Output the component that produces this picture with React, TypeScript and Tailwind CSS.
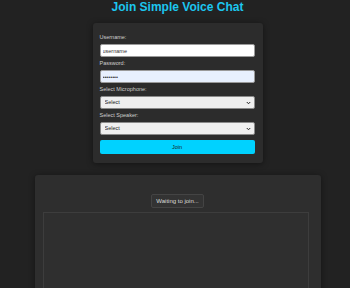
import React from "react";

const fields = [
  { label: "Username:", kind: "text", value: "username" },
  { label: "Password:", kind: "password", value: "password" },
  { label: "Select Microphone:", kind: "select", value: "Select" },
  { label: "Select Speaker:", kind: "select", value: "Select" },
];

function Chevron() {
  return (
    <svg
      className="pointer-events-none absolute right-[4px] top-[5px]"
      width="5"
      height="4"
      viewBox="0 0 10 8"
    >
      <path d="M1.5 2 L5 5.5 L8.5 2" fill="none" stroke="#222" strokeWidth="2" />
    </svg>
  );
}

export default function App() {
  return (
    <div
      className="h-[288px] overflow-hidden bg-[#222222] pl-[5px] flex flex-col items-center"
      style={{ fontFamily: '"Liberation Sans", Arial, sans-serif' }}
    >
      <h1 className="text-[12px] leading-[12px] font-bold text-[#1cc6ef] mt-[1px]">
        Join Simple Voice Chat
      </h1>

      <div className="mt-[10px] w-[170px] shrink-0 rounded-[3px] bg-[#2c2c2c] pt-[11px] pb-[9px] pl-[7px] pr-[8px] shadow-[0_1px_6px_rgba(0,0,0,0.45)]">
        {fields.map((f) => (
          <div key={f.label} className="mb-[3px] text-[5.5px] leading-[7px]">
            <div className="text-[#cfcfcf] mb-[3px]">{f.label}</div>
            {f.kind === "select" ? (
              <div className="relative">
                <select
                  className="block appearance-none w-full h-[13px] bg-[#efefef] border border-[#8a8a8a] rounded-[2px] pl-[4px] text-[5.5px] text-[#222] outline-none"
                  defaultValue={f.value}
                >
                  <option>{f.value}</option>
                </select>
                <Chevron />
              </div>
            ) : (
              <input
                readOnly
                type={f.kind}
                value={f.value}
                className={
                  "block w-full h-[13px] border border-[#9a9a9a] rounded-[2px] px-[2px] text-[5.5px] text-[#333] outline-none " +
                  (f.kind === "password" ? "bg-[#e8f0fe]" : "bg-white")
                }
              />
            )}
          </div>
        ))}
        <button className="block mt-[5px] w-full h-[14px] bg-[#00d2ff] rounded-[2px] text-[5.5px] leading-[7px] text-[#1a1a1a]">
          Join
        </button>
      </div>

      <div className="mt-[12px] w-[286px] h-[140px] shrink-0 rounded-[3px] bg-[#2e2e2e] pt-[19px] pl-[8px] pr-[12px] flex flex-col items-center shadow-[0_1px_6px_rgba(0,0,0,0.45)]">
        <div className="ml-[4px] h-[14px] px-[4px] flex items-center rounded-[2px] border border-[#444] bg-[#333333] text-[6px] text-[#dddddd]">
          Waiting to join...
        </div>
        <div className="mt-[4px] w-full flex-1 border border-[#3d3d3d] bg-[#2f2f2f]" />
      </div>
    </div>
  );
}
